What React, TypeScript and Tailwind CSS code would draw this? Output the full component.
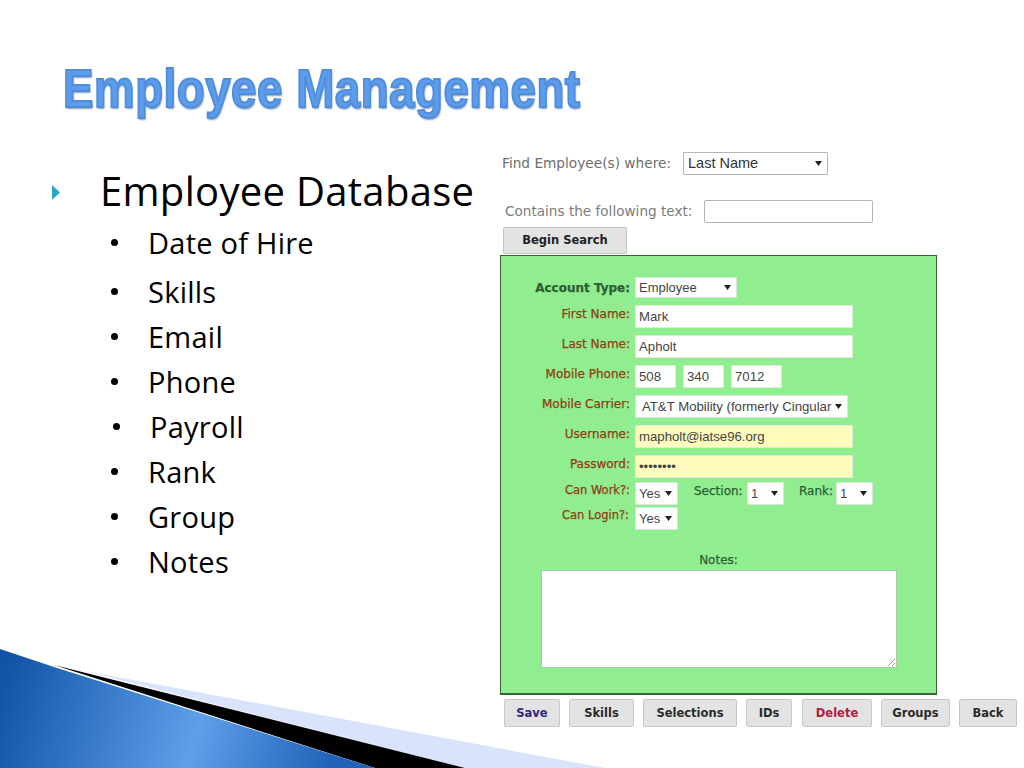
const BULLETS = [
  { text: "Date of Hire", cls: "mt-[12px]", shift: "" },
  { text: "Skills", cls: "mt-[20px]", shift: "" },
  { text: "Email", cls: "mt-[16px]", shift: "" },
  { text: "Phone", cls: "mt-[16px]", shift: "" },
  { text: "Payroll", cls: "mt-[16px]", shift: "ml-[2px]" },
  { text: "Rank", cls: "mt-[16px]", shift: "" },
  { text: "Group", cls: "mt-[16px]", shift: "" },
  { text: "Notes", cls: "mt-[16px]", shift: "" },
];

const BUTTONS = [
  { text: "Save", w: "w-[56px]", color: "text-[#2a2a80]" },
  { text: "Skills", w: "w-[65px]", color: "text-[#2b2b2b]" },
  { text: "Selections", w: "w-[94px]", color: "text-[#2b2b2b]" },
  { text: "IDs", w: "w-[46px]", color: "text-[#2b2b2b]" },
  { text: "Delete", w: "w-[70px] ml-[1px]", color: "text-[#b0203a]" },
  { text: "Groups", w: "w-[69px]", color: "text-[#2b2b2b]" },
  { text: "Back", w: "w-[58px]", color: "text-[#2b2b2b]" },
];

function Arrow() {
  return (
    <svg width="7" height="5" viewBox="0 0 7 5" className="shrink-0">
      <path d="M0 0h7L3.500 5z" fill="#222" />
    </svg>
  );
}

function Select({ value, width, className = "border-[#d8e8d8] text-[13px] text-[#444] pl-[3px]" }: { value: string; width: string; className?: string }) {
  return (
    <div className={`flex items-center justify-between overflow-hidden rounded-[1px] border bg-white pr-[5px] font-['Liberation_Sans',sans-serif] ${width} ${className}`}>
      <span className="whitespace-nowrap">{value}</span>
      <Arrow />
    </div>
  );
}

function Field({ value, width, yellow }: { value: string; width: string; yellow?: boolean }) {
  return (
    <div className={`flex h-[23px] items-center rounded-[1px] border border-[#dcecd8] pl-[3px] font-['Liberation_Sans',sans-serif] text-[13.200px] text-[#444] ${width} ${yellow ? "bg-[#fdfcbd]" : "bg-white"}`}>
      {value}
    </div>
  );
}

function Row({ label, color, children, className = "" }: { label: string; color: string; children: React.ReactNode; className?: string }) {
  return (
    <div className={`flex items-center ${className}`}>
      <div className={`w-[129px] whitespace-nowrap pb-[5px] text-right [-webkit-text-stroke:0.250px] ${color}`}>{label}</div>
      <div className="ml-[5px] flex items-center">{children}</div>
    </div>
  );
}

export default function App() {
  return (
    <div className="relative h-[768px] w-[1024px] overflow-hidden bg-white">
      {/* slide corner decoration */}
      <svg className="absolute bottom-0 left-0" width="620" height="125" viewBox="0 643 620 125">
        <defs>
          <linearGradient id="wedge" x1="0" y1="670" x2="330" y2="768" gradientUnits="userSpaceOnUse">
            <stop offset="0" stopColor="#0f52a6" />
            <stop offset="0.6" stopColor="#5e9fe9" />
            <stop offset="1" stopColor="#1f63b8" />
          </linearGradient>
        </defs>
        <polygon points="85,671 605,768 465,768" fill="#d8e4fb" />
        <polygon points="54,665 465,768 375,768" fill="#000" />
        <polygon points="0,649 54,667 375,768 0,768" fill="url(#wedge)" />
      </svg>

      <div className="relative flex h-full flex-col">
        <h1 className="ml-[63px] mt-[59px] origin-left scale-x-[0.862] whitespace-nowrap font-['Liberation_Sans',sans-serif] text-[53px] font-bold leading-[60px] tracking-[0.6px] text-[#5c9cea] [-webkit-text-stroke:2px_#4f8ddd] [text-shadow:1px_2px_2px_#8a9bb0]">
          Employee Management
        </h1>

        <div className="flex">
          {/* left bullets */}
          <div className="w-[500px] shrink-0 font-['Open_Sans',sans-serif]">
            <div className="ml-[52px] mt-[47px] flex items-center">
              <svg width="8" height="15" viewBox="0 0 8 15" className="mt-[3px] shrink-0">
                <path d="M0 0l8 7.500L0 15z" fill="#2aa5c4" />
              </svg>
              <span className="ml-[40px] whitespace-nowrap text-[40px] leading-[50px] tracking-[0.3px] text-black">Employee Database</span>
            </div>
            <ul className="ml-[111px]">
              {BULLETS.map((b) => (
                <li key={b.text} className={`flex h-[29px] items-center text-[29px] leading-[29px] tracking-[0.25px] text-black ${b.cls} ${b.shift}`}>
                  <span className="h-[7px] w-[7px] rounded-full bg-black" />
                  <span className="ml-[30px] whitespace-nowrap">{b.text}</span>
                </li>
              ))}
            </ul>
          </div>

          {/* right form screenshot */}
          <div className="mt-[33px] font-['DejaVu_Sans',sans-serif]">
            <div className="flex h-[23px] items-center">
              <span className="ml-[2px] w-[181px] whitespace-nowrap text-[13.700px] text-[#6e6e6e]">Find Employee(s) where:</span>
              <Select value="Last Name" width="w-[145px] h-[23px]" className="border-[#b5b5b5] text-[14.500px] text-[#333] pl-[4px]" />
            </div>
            <div className="mt-[25px] flex h-[23px] items-center">
              <span className="ml-[5px] w-[199px] whitespace-nowrap text-[13.600px] text-[#7c7c7c]">Contains the following text:</span>
              <div className="h-[23px] w-[169px] rounded-[2px] border border-[#b5b5b5] bg-white" />
            </div>
            <button className="ml-[3px] mt-[4px] block h-[27px] w-[124px] rounded-[2px] border border-[#c4c4c4] bg-[#e3e3e3] pt-[1px] text-[11.500px] font-bold text-[#222]">
              Begin Search
            </button>

            {/* green panel */}
            <div className="mt-[1px] h-[440px] w-[437px] border border-b-2 border-[#33643a] bg-[#90ee90] pt-[20px]">
              <Row label="Account Type:" color="text-[12px] font-bold text-[#2c5e35] relative top-[3px]">
                <Select value="Employee" width="w-[102px] h-[21px]" />
              </Row>
              <Row label="First Name:" color="text-[12px] text-[#8f3c10]" className="mt-[6px]">
                <Field value="Mark" width="w-[218px]" />
              </Row>
              <Row label="Last Name:" color="text-[12px] text-[#8f3c10]" className="mt-[7px]">
                <Field value="Apholt" width="w-[218px]" />
              </Row>
              <Row label="Mobile Phone:" color="text-[12px] text-[#8f3c10]" className="mt-[7px]">
                <Field value="508" width="w-[41px]" />
                <div className="ml-[7px]"><Field value="340" width="w-[41px]" /></div>
                <div className="ml-[7px]"><Field value="7012" width="w-[51px]" /></div>
              </Row>
              <Row label="Mobile Carrier:" color="text-[12px] text-[#8f3c10]" className="mt-[7px]">
                <Select value="AT&T Mobility (formerly Cingular" width="w-[213px] h-[23px]" className="border-[#d8e8d8] pl-[6px] text-[13.200px] text-[#444]" />
              </Row>
              <Row label="Username:" color="text-[12px] text-[#8f3c10]" className="mt-[7px]">
                <Field value="mapholt@iatse96.org" width="w-[218px]" yellow />
              </Row>
              <Row label="Password:" color="text-[12px] text-[#8f3c10]" className="mt-[7px]">
                <Field value="••••••••" width="w-[218px]" yellow />
              </Row>
              <Row label="Can Work?:" color="text-[11.500px] text-[#8f3c10]" className="mt-[4px]">
                <Select value="Yes" width="w-[43px] h-[23px]" />
                <span className="ml-[16px] w-[53px] pb-[5px] text-[12px] text-[#2c5e35] [-webkit-text-stroke:0.250px]">Section:</span>
                <Select value="1" width="w-[37px] h-[23px]" />
                <span className="ml-[15px] w-[37px] pb-[5px] text-[12px] text-[#2c5e35] [-webkit-text-stroke:0.250px]">Rank:</span>
                <Select value="1" width="w-[37px] h-[23px]" />
              </Row>
              <Row label="Can Login?:" color="text-[11.500px] text-[#8f3c10] pr-[1px]" className="mt-[2px]">
                <Select value="Yes" width="w-[43px] h-[23px]" />
              </Row>
              <div className="mt-[22px] text-center text-[12px] leading-[16px] text-[#2c5e35] [-webkit-text-stroke:0.250px]">Notes:</div>
              <div className="relative ml-[40px] mt-[2px] h-[98px] w-[356px] border border-[#a9c9a9] bg-white">
                <svg width="9" height="9" viewBox="0 0 9 9" className="absolute bottom-0 right-0">
                  <path d="M1 8l7-7M5 8l3-3" stroke="#999" strokeWidth="1" fill="none" />
                </svg>
              </div>
            </div>

            <div className="ml-[4px] mt-[4px] flex gap-[9px]">
              {BUTTONS.map((b) => (
                <button key={b.text} className={`h-[28px] shrink-0 rounded-[2px] border border-[#c8c8c8] bg-[#e3e3e3] pt-[1px] text-[11.500px] font-bold ${b.w} ${b.color}`}>
                  {b.text}
                </button>
              ))}
            </div>
          </div>
        </div>
      </div>
    </div>
  );
}
